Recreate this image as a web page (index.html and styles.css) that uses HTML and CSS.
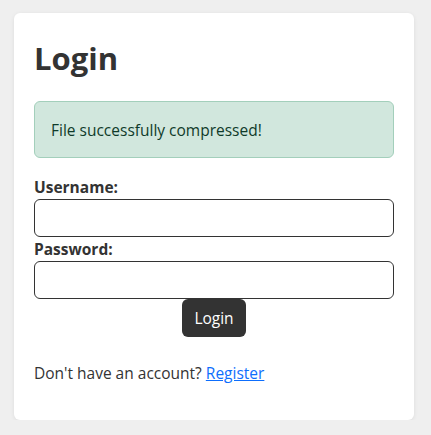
FILE: index.html
```html
<!DOCTYPE html>
<html lang="en">
<head>
<meta charset="utf-8">
<title>Login</title>
<link rel="stylesheet" href="styles.css">
</head>
<body>
<div class="card">
  <h1 class="title">Login</h1>
  <div class="alert">File successfully compressed!</div>
  <form class="form">
    <label class="label" for="username">Username:</label>
    <input class="input" type="text" id="username">
    <label class="label" for="password">Password:</label>
    <input class="input" type="password" id="password">
    <button class="btn" type="button">Login</button>
  </form>
  <p class="footer">Don't have an account? <a class="link" href="#">Register</a></p>
</div>
</body>
</html>
```

FILE: styles.css
```css
html, body {
  margin: 0;
  padding: 0;
  background: #efefef;
}
body {
  font-family: "Open Sans", "Noto Sans", sans-serif;
  font-size: 16px;
  line-height: 24px;
  color: #333;
  padding: 13px 17px 0 14px;
}
.card {
  width: 360px;
  background: #fff;
  border-radius: 6px;
  box-shadow: 0 1px 4px rgba(0,0,0,0.08);
  padding: 20px 20px 35px 20px;
}
.title {
  font-size: 31px;
  line-height: 38px;
  font-weight: 700;
  margin: 6px 0 24px 0;
  color: #333;
}
.alert {
  background: #d1e7dd;
  border: 1px solid #a3cfbb;
  color: #0f3b2a;
  border-radius: 6px;
  padding: 16px 16px 15px 16px;
  height: 24px;
  font-size: 15.5px;
}
.form {
  display: flex;
  flex-direction: column;
  margin-top: 17px;
}
.label {
  font-weight: 700;
  line-height: 24px;
  font-size: 15.5px;
}
.input {
  box-sizing: border-box;
  height: 38px;
  width: 100%;
  margin: 0;
  border: 1px solid #333;
  border-radius: 6px;
  font: inherit;
  padding: 0 8px;
}
.btn {
  align-self: center;
  height: 38px;
  padding: 0 12px;
  border: none;
  border-radius: 6px;
  background: #333;
  color: #fff;
  font: inherit;
  font-size: 15.5px;
  margin: 0;
}
.footer {
  margin: 24px 0 0 0;
  font-size: 15.5px;
}
.link {
  color: #0d6efd;
}
```
